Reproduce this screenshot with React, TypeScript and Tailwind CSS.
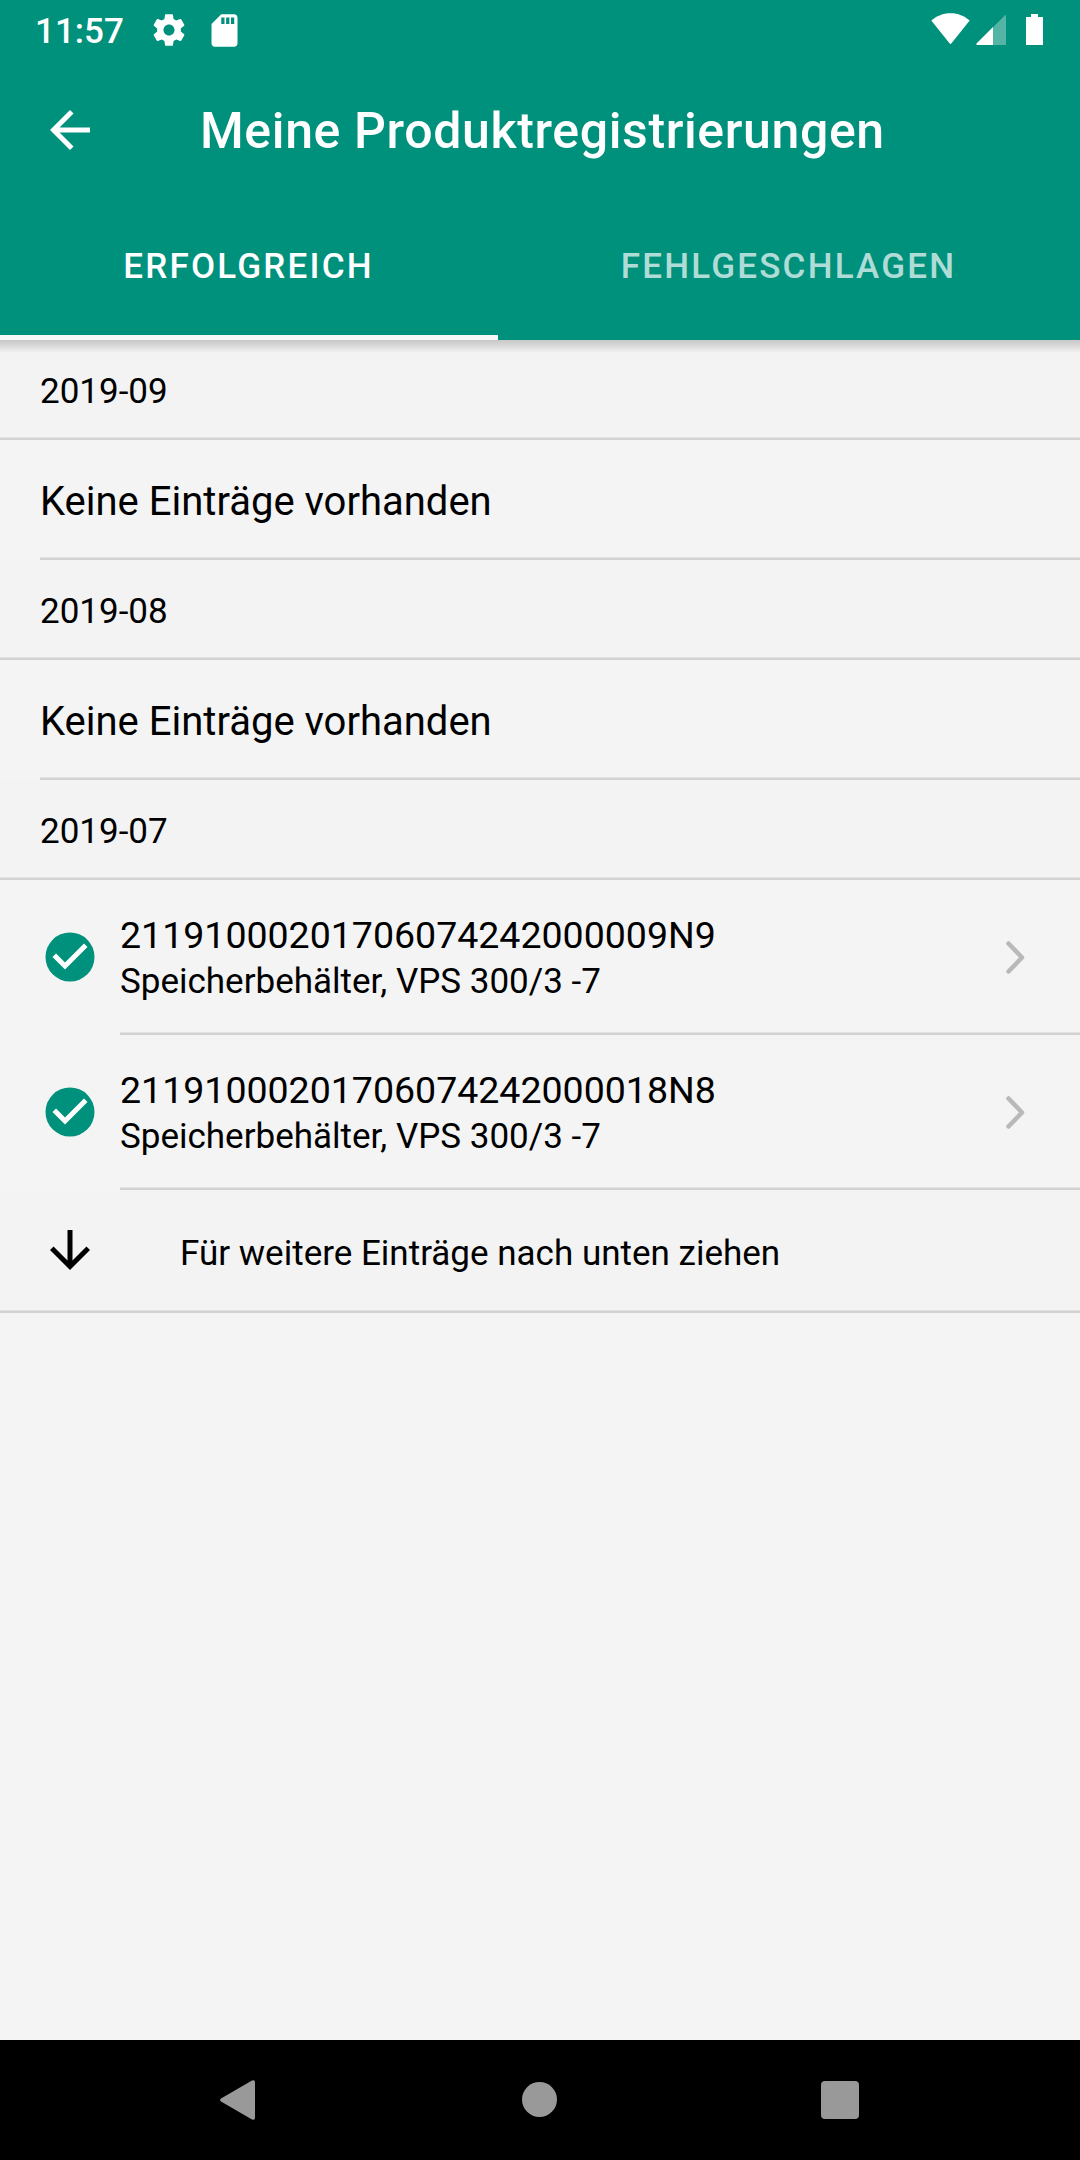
import type { ReactNode } from "react";

function StatusBar() {
  return (
    <div className="flex h-[60px] items-start pl-[35px] text-white">
      <span className="mt-3 w-[115px] text-[35px] leading-[40px] font-medium">11:57</span>
      <svg className="mt-[11px] size-[38px]" viewBox="0 0 24 24" fill="currentColor">
        <path d="M19.43 12.98c.04-.32.07-.64.07-.98s-.03-.66-.07-.98l2.11-1.65c.19-.15.24-.42.12-.64l-2-3.46c-.12-.22-.39-.3-.61-.22l-2.49 1c-.52-.4-1.08-.73-1.69-.98l-.38-2.65C14.46 2.18 14.25 2 14 2h-4c-.25 0-.46.18-.49.42l-.38 2.65c-.61.25-1.17.59-1.69.98l-2.49-1c-.23-.09-.49 0-.61.22l-2 3.46c-.13.22-.07.49.12.64l2.11 1.65c-.04.32-.07.65-.07.98s.03.66.07.98l-2.11 1.65c-.19.15-.24.42-.12.64l2 3.46c.12.22.39.3.61.22l2.49-1c.52.4 1.08.73 1.69.98l.38 2.65c.03.24.24.42.49.42h4c.25 0 .46-.18.49-.42l.38-2.65c.61-.25 1.17-.59 1.69-.98l2.49 1c.23.09.49 0 .61-.22l2-3.46c.12-.22.07-.49-.12-.64l-2.11-1.65zM12 15.5c-1.93 0-3.5-1.57-3.5-3.5s1.57-3.5 3.5-3.5 3.5 1.57 3.5 3.5-1.57 3.5-3.5 3.5z" />
      </svg>
      <svg className="mt-[11px] ml-[17px] size-[39px]" viewBox="0 0 24 24" fill="currentColor">
        <path d="M18 2h-8L4.02 8 4 20c0 1.1.9 2 2 2h12c1.1 0 2-.9 2-2V4c0-1.1-.9-2-2-2zm-6 6h-2V4h2v4zm3 0h-2V4h2v4zm3 0h-2V4h2v4z" />
      </svg>
      <div className="mt-[13px] mr-[37px] ml-auto flex">
        <svg className="h-8 w-[39px]" viewBox="0 0 39 32" fill="currentColor">
          <path d="M0.3 7.6C5.5 2.8 12 0.2 19.5 0.2S33.500 2.800 38.700 7.600L20.500 30.300Q19.500 31.500 18.500 30.300Z" />
        </svg>
        <svg className="ml-[6px] h-8 w-[31px]" viewBox="0 0 31 32" fill="currentColor">
          <path d="M17 14.200 29 2.200Q30 1.400 30 2.800V32H17Z" fillOpacity="0.33" />
          <path d="M17 14v18H1Q0 31.500 0.500 30.500Z" />
        </svg>
        <svg className="ml-[19px] h-8 w-[17px]" viewBox="0 0 17 32" fill="currentColor">
          <path d="M5 1H12V4H17V32H0V4H5Z" />
        </svg>
      </div>
    </div>
  );
}

function TitleBar() {
  return (
    <div className="flex h-[140px] items-center pl-10 text-white">
      <svg className="size-[60px]" viewBox="0 0 24 24" fill="currentColor">
        <path d="M20 11H7.830l5.590-5.590L12 4l-8 8 8 8 1.410-1.410L7.830 13H20v-2z" />
      </svg>
      <h1 className="ml-[100px] pt-[2px] text-[50px] leading-[60px] font-medium tracking-[0.0125em]">
        Meine Produktregistrierungen
      </h1>
    </div>
  );
}

function Tabs() {
  return (
    <div className="flex h-[140px] text-[35px] font-medium tracking-[2.2px]">
      <div className="flex w-[498px] items-center justify-center border-b-[5px] border-[#f8f8f8] pr-px text-white">
        ERFOLGREICH
      </div>
      <div className="flex flex-1 items-center justify-center pr-px pb-[5px] text-white/70">
        FEHLGESCHLAGEN
      </div>
    </div>
  );
}

function Divider() {
  return <div className="h-[3px] shrink-0 border-t border-[#e2e2e2] bg-[#d2d2d2]" />;
}

function MonthHeader({ children }: { children: ReactNode }) {
  return (
    <div className="flex h-[100px] flex-col bg-[#f3f3f3]">
      <div className="flex flex-1 items-center pt-[7px] pl-10 text-[35px] leading-[42px]">{children}</div>
      <Divider />
    </div>
  );
}

function EmptyRow() {
  return (
    <div className="flex h-[120px] flex-col pl-10">
      <div className="flex flex-1 items-center pt-[7px] text-[40px] leading-[48px]">
        Keine Einträge vorhanden
      </div>
      <Divider />
    </div>
  );
}

function ProductRow({ serial, name }: { serial: string; name: string }) {
  return (
    <div className="flex h-[155px] pl-10">
      <svg className="mt-[47px] size-[60px]" viewBox="0 0 24 24">
        <circle cx="12" cy="12" r="9.800" fill="#00917c" />
        <path d="M10 17l-5-5 1.410-1.410L10 14.170l7.590-7.590L19 8z" fill="#fff" />
      </svg>
      <div className="ml-5 flex flex-1 flex-col">
        <div className="flex flex-1 items-start">
          <div className="pt-8">
            <div className="text-[37.5px] leading-[46px]">{serial}</div>
            <div className="text-[35px] leading-[48px]">{name}</div>
          </div>
          <svg className="mt-[59px] mr-[52px] ml-auto h-9 w-[22px]" viewBox="0 0 22 36" fill="none">
            <path d="M2.500 4.500 16 18.500 2.500 32.500" stroke="#b9b9b9" strokeWidth="4.500" strokeLinecap="round" strokeLinejoin="round" />
          </svg>
        </div>
        <Divider />
      </div>
    </div>
  );
}

function PullRow() {
  return (
    <div className="flex h-[123px] flex-col bg-[#f3f3f3]">
      <div className="flex flex-1 items-center pl-10">
        <svg className="size-[60px]" viewBox="0 0 24 24" fill="#000">
          <path d="M20 12l-1.410-1.410L13 16.170V4h-2v12.170l-5.580-5.590L4 12l8 8 8-8z" />
        </svg>
        <span className="pt-[8px] pl-20 text-[35px] leading-[42px]">Für weitere Einträge nach unten ziehen</span>
      </div>
      <Divider />
    </div>
  );
}

function NavigationBar() {
  return (
    <div className="flex h-[120px] items-center bg-black pl-[220px]">
      <svg className="h-10 w-[35px]" viewBox="0 0 35 40" fill="#999">
        <path d="M1 18.500 32 0.500Q35 -0.500 35 2V38Q35 40.500 32 39.500L1 21.500Q-0.800 20 1 18.500Z" />
      </svg>
      <div className="mb-px ml-[267px] size-[35px] rounded-full bg-[#999]" />
      <div className="ml-[264px] size-[38px] rounded-[4px] bg-[#999]" />
    </div>
  );
}

export default function App() {
  return (
    <div className="flex h-[2160px] w-[1080px] flex-col bg-[#f4f4f4] font-[Roboto,sans-serif] text-black">
      <header className="relative h-[340px] shrink-0 bg-[#00917c]">
        <StatusBar />
        <TitleBar />
        <Tabs />
        <div className="absolute top-full left-0 h-[13px] w-full bg-linear-to-b from-black/18 via-black/10 to-transparent" />
      </header>
      <main className="flex-1">
        <MonthHeader>2019-09</MonthHeader>
        <EmptyRow />
        <MonthHeader>2019-08</MonthHeader>
        <EmptyRow />
        <MonthHeader>2019-07</MonthHeader>
        <ProductRow serial="21191000201706074242000009N9" name="Speicherbehälter, VPS 300/3 -7" />
        <ProductRow serial="21191000201706074242000018N8" name="Speicherbehälter, VPS 300/3 -7" />
        <PullRow />
      </main>
      <NavigationBar />
    </div>
  );
}
